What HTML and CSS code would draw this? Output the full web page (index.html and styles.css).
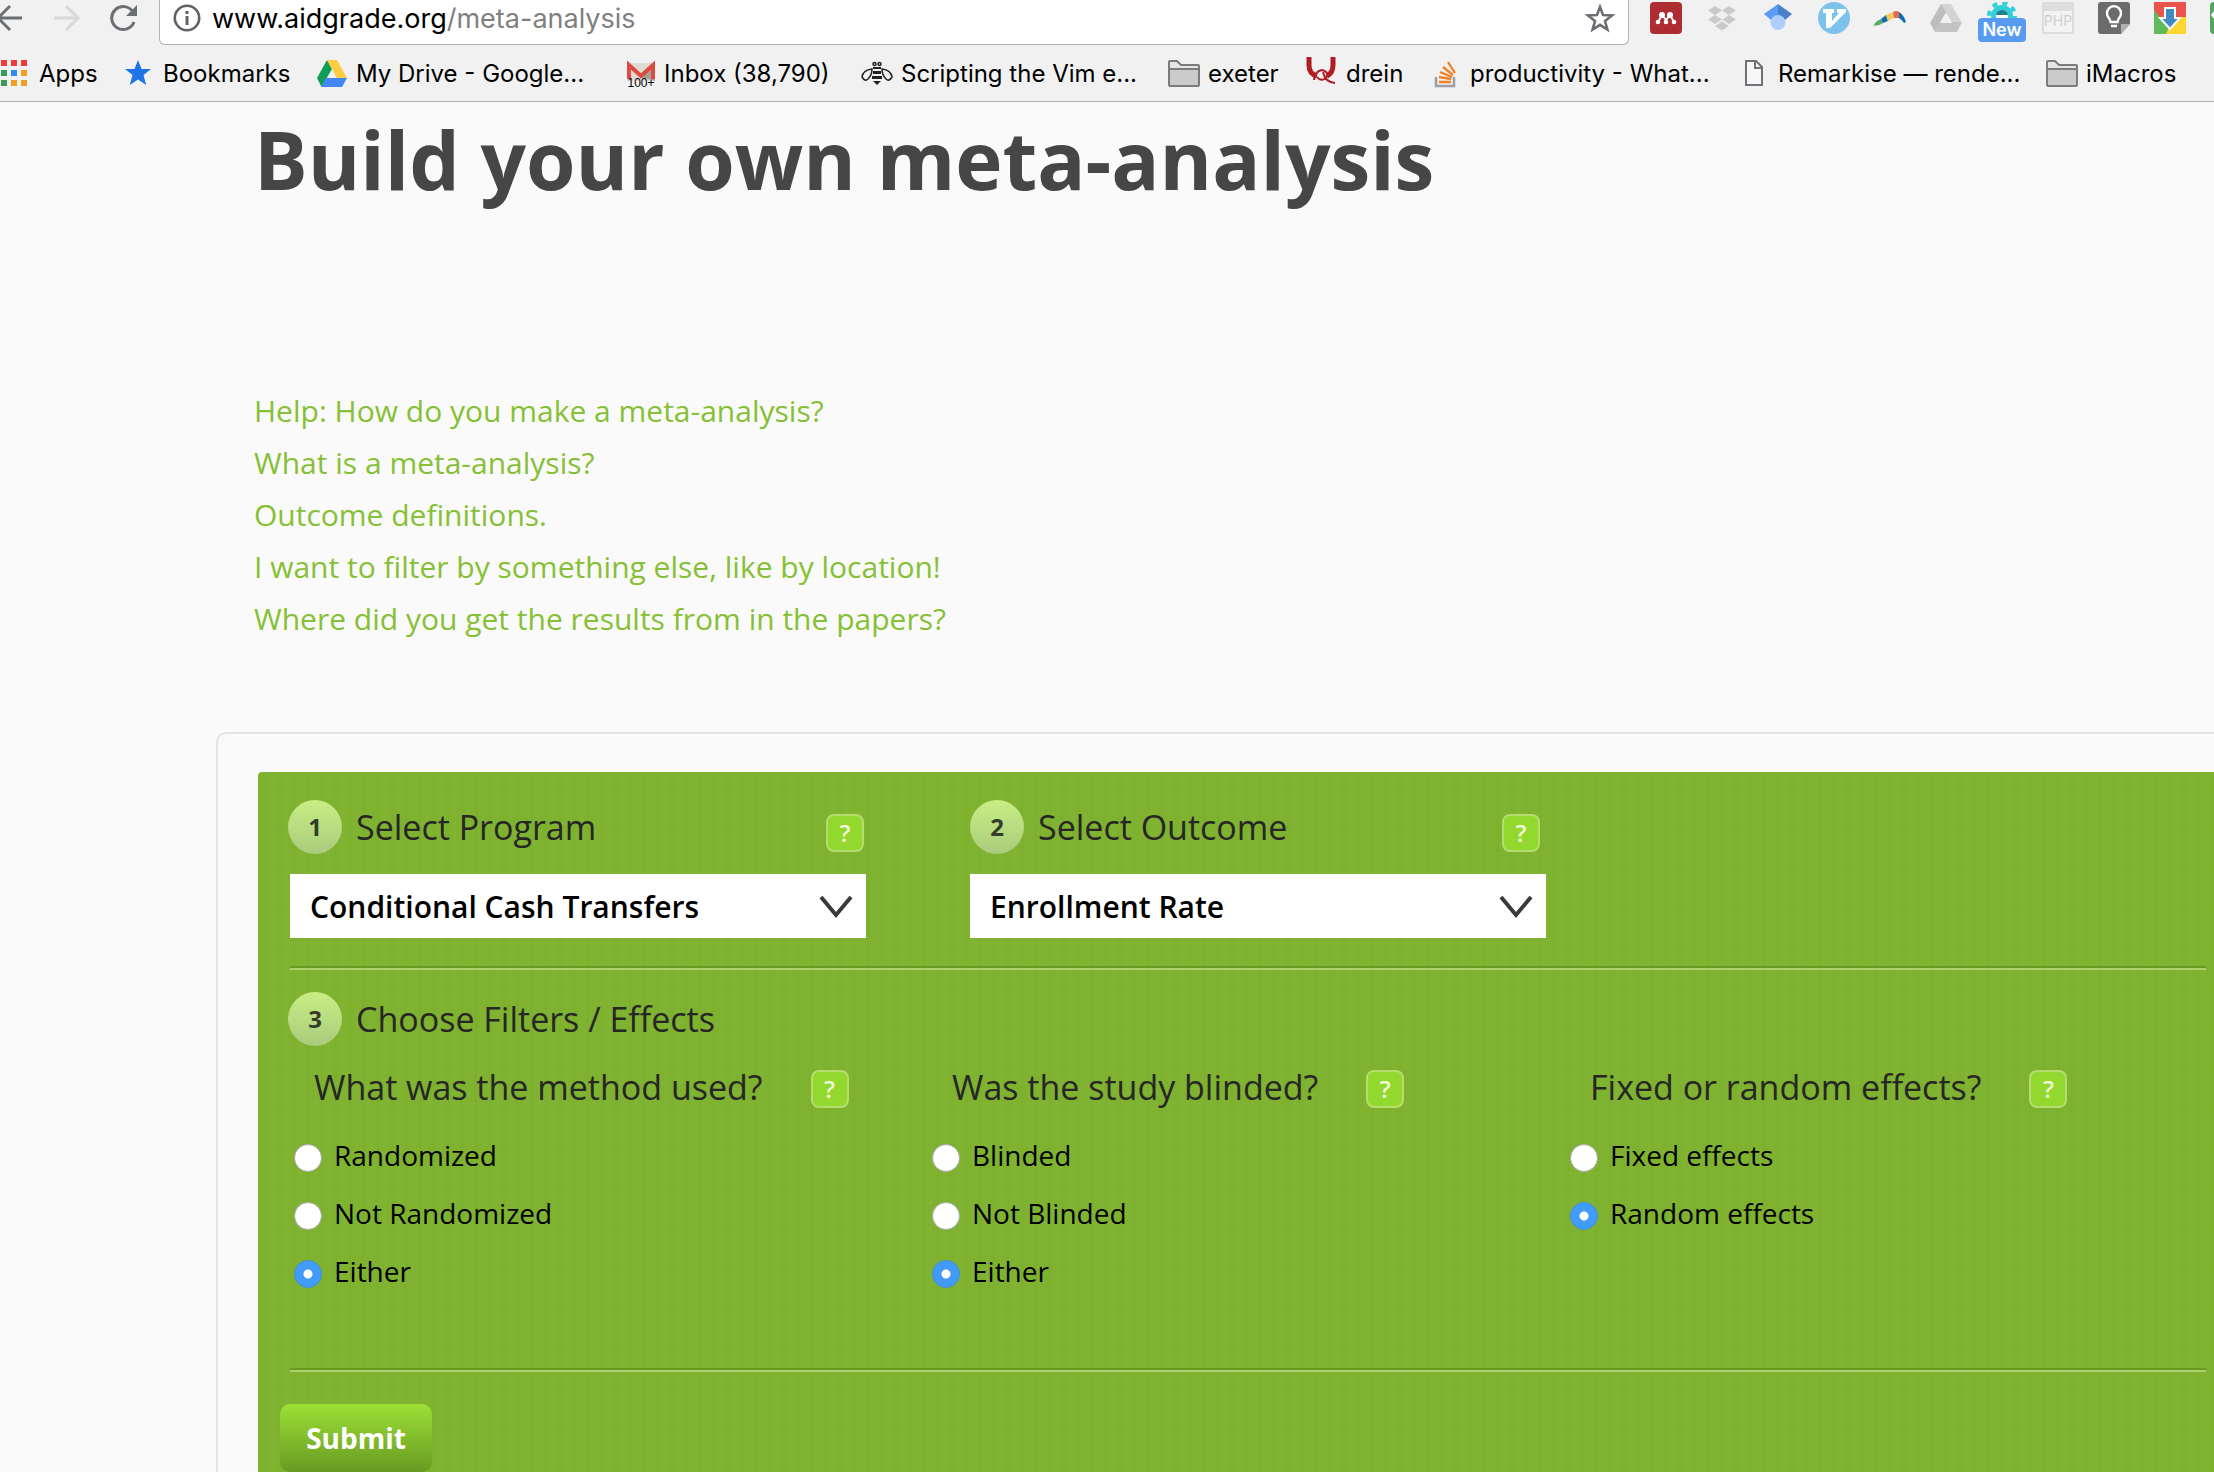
FILE: index.html
```html
<!DOCTYPE html>
<html lang="en">
<head>
<meta charset="utf-8">
<title>Build your own meta-analysis</title>
<link rel="stylesheet" href="styles.css">
</head>
<body>
<header class="browser">
  <div class="toolbar">
    <div class="nav">
      <button class="icon-button" type="button" aria-label="Back"><svg width="28" height="28" viewBox="0 0 28 28" fill="none" stroke="#6b6e72" stroke-width="3"><path d="M25 14H2M13 2 1 14l12 12"/></svg></button>
      <button class="icon-button" type="button" aria-label="Forward"><svg width="28" height="28" viewBox="0 0 28 28" fill="none" stroke="#d6d8da" stroke-width="3"><path d="M1 14h23M13 2l12 12-12 12"/></svg></button>
      <button class="icon-button" type="button" aria-label="Reload"><svg width="28" height="28" viewBox="0 0 28 28"><path d="M24 8A11.500 11.500 0 1 0 25 18" fill="none" stroke="#6b6e72" stroke-width="3"/><path d="M28 1v11H17z" fill="#6b6e72"/></svg></button>
    </div>
    <div class="address">
      <svg width="28" height="28" viewBox="0 0 28 28"><circle cx="14" cy="14" r="12.200" fill="none" stroke="#5f6368" stroke-width="2.600"/><path d="M12.500 7h3v3h-3zM12.500 12h3v9h-3z" fill="#5f6368"/></svg>
      <span class="url">www.aidgrade.org<span class="path">/meta-analysis</span></span>
      <svg width="30" height="30" viewBox="0 0 30 30"><path d="M15 4l3 8 9 .4-7 5.600 2.400 8.600L15 21.800 7.600 26.600 10 18l-7-5.600 9-.4z" fill="none" stroke="#6b6e72" stroke-width="2.600"/></svg>
    </div>
    <div class="extensions">
      <svg width="32" height="32" viewBox="0 0 32 32"><rect width="32" height="32" rx="4" fill="#ad2d30"/><g fill="#fff"><circle cx="12" cy="13" r="3"/><circle cx="20" cy="13" r="3"/><circle cx="8" cy="20" r="2.300"/><circle cx="16" cy="20" r="2.300"/><circle cx="24" cy="20" r="2.300"/></g><path d="M8 20l4-7 4 5 4-5 4 7" fill="none" stroke="#fff" stroke-width="2"/></svg>
      <svg width="32" height="32" viewBox="0 0 32 32" fill="#cacaca"><path d="M9 4l7 4.500L9 13 2 8.500zM23 4l7 4.500-7 4.500-7-4.500zM9 13l7 4.500L9 22l-7-4.500zM23 13l7 4.500-7 4.500-7-4.500zM16 19.500l7 4.500-7 4.500L9 24z"/></svg>
      <svg width="32" height="32" viewBox="0 0 32 32"><path d="M16 2L2 12l7 6h7z" fill="#5b9cf5"/><path d="M16 2l14 10-7 6h-7z" fill="#4a80cc"/><circle cx="16" cy="20.500" r="7.500" fill="#aecdfb"/></svg>
      <svg width="32" height="32" viewBox="0 0 32 32"><circle cx="16" cy="16" r="16" fill="#7cc2ea"/><path d="M5 7h11v4h-2v8l7-8h-2V7h9v3L12 26H8V11H5z" fill="#fff"/></svg>
      <svg width="32" height="32" viewBox="0 0 32 32"><path d="M0 24q0-4 7-7l2 4q-4 3-9 3z" fill="#55ad68"/><path d="M7 17l5-4 2 6-5 2z" fill="#116fae"/><path d="M12 13l7-3 1 6-6 3z" fill="#fbc957"/><path d="M19 10q4-2 6 0v6l-5 0z" fill="#e96a55"/><path d="M25 10q5 3 7 10l-2 1q-2-3-5-5z" fill="#116fae"/></svg>
      <svg width="32" height="32" viewBox="0 0 32 32"><path d="M11 2h10L11 19 5 30 0 21z" fill="#bdbdbd"/><path d="M11 2h10l11 19H22z" fill="#d4d4d4"/><path d="M10 20h22l-5 10H5z" fill="#c3c3c3"/><path d="M16 11l6 10H10z" fill="#f1f1f1"/></svg>
      <div class="ext-new"><svg width="32" height="32" viewBox="0 0 32 32"><circle cx="16" cy="14" r="8.500" fill="none" stroke="#2fd0d8" stroke-width="5"/><circle cx="16" cy="14" r="13" fill="none" stroke="#2fd0d8" stroke-width="4" stroke-dasharray="5 5.200"/><circle cx="16" cy="14" r="6" fill="#fff"/><path d="M10 13a6 5 0 0 1 12 0" fill="#217f92"/></svg><span class="badge">New</span></div>
      <svg width="32" height="32" viewBox="0 0 32 32"><rect x="1" y="1" width="30" height="30" fill="#f3f3f3" stroke="#dcdcdc" stroke-width="2"/><path d="M2 2h28v7H2z" fill="#dedede"/><text x="16" y="24" text-anchor="middle" class="php">PHP</text></svg>
      <svg width="32" height="32" viewBox="0 0 32 32"><path d="M3 0h26q3 0 3 3v19l-9 10H3q-3 0-3-3V3q0-3 3-3z" fill="#6b6b6b"/><path d="M23 32v-10h9z" fill="#b0b0b0"/><path d="M12.500 20q0-2-2-4.500a7 7 0 1 1 11 0q-2 2.500-2 4.500zM13 24h6" fill="none" stroke="#fff" stroke-width="2.400"/></svg>
      <svg width="32" height="32" viewBox="0 0 32 32"><path d="M0 0h32v16H0z" fill="#e9544d"/><path d="M0 8l16 20-3 4H0z" fill="#5fba5c"/><path d="M32 15v17H12l8-17z" fill="#fdd630"/><path d="M11 6h10v10h5L16 27 6 16h5z" fill="#428bc0" stroke="#fff" stroke-width="2"/></svg>
      <svg width="4" height="32" viewBox="0 0 4 32"><path d="M4 0v32q-4 0-4-4V4q0-4 4-4z" fill="#4fa85b"/><path d="M4 9v8l-3-4z" fill="#fff"/></svg>
    </div>
  </div>
  <nav class="bookmarks">
    <a href="#apps"><svg width="32" height="32" viewBox="0 0 32 32"><path d="M2 3h6v6H2zM12 3h6v6h-6zM22 3h6v6h-6z" fill="#f03a3a"/><path d="M2 13h6v6H2zM2 23h6v6H2z" fill="#3a9b5c"/><path d="M12 13h6v6h-6z" fill="#2c8cf0"/><path d="M22 13h6v6h-6zM12 23h6v6h-6zM22 23h6v6h-6z" fill="#f0a020"/></svg>Apps</a>
    <a href="#bookmarks"><svg width="32" height="32" viewBox="0 0 32 32"><path d="M15 3l3.500 9H28l-7.500 6 2.700 10L15 22.500 6.800 28l2.700-10L2 12h9.500z" fill="#1f74e8"/></svg>Bookmarks</a>
    <a href="#drive"><svg width="32" height="32" viewBox="0 0 32 32"><path d="M11 3L1 21l4.500 9L16 12z" fill="#109d58"/><path d="M11 3h10l10 18H21z" fill="#ffcd40"/><path d="M10 21h21l-5 9H5.500z" fill="#4386f5"/></svg>My Drive - Google...</a>
    <a href="#inbox"><svg width="32" height="32" viewBox="0 0 32 32"><path d="M3 6h28v18H3z" fill="#dedbd2"/><path d="M17 20L31 8v16z" fill="#a3a19c"/><path d="M5 22V8l12 11L29 8v14" fill="none" stroke="#de4b40" stroke-width="4"/><text x="17" y="30" text-anchor="middle" class="count">100+</text></svg>Inbox (38,790)</a>
    <a href="#vim"><svg width="32" height="32" viewBox="0 0 32 32"><g fill="none" stroke="#222" stroke-width="1.500"><path d="M11 12Q2 13 1 20q3 5 6 2 4-4 4-10zM21 12q9 1 10 8-3 5-6 2-4-4-4-10z"/><circle cx="13.500" cy="7" r="1.500"/><circle cx="18.500" cy="7" r="1.500"/></g><path d="M12 10h8v2h-8zM12 14h8v3h-8zM11 19h10v3H11zM12 24h8l-4 4z" fill="#222"/></svg>Scripting the Vim e...</a>
    <a href="#exeter"><svg width="32" height="32" viewBox="0 0 32 32"><path d="M1 29V5q0-1 1-1h8l3 4h17q1 0 1 1v20q0 1-1 1H2q-1 0-1-1z" fill="#e6e6e6"/><path d="M2 12h28v17H2z" fill="#cbcbcb"/><path d="M1 28V5q0-1 1-1h7l4 4h17q1 0 1 1v19q0 1-1 1H2q-1 0-1-1zM1 12h30" fill="none" stroke="#7c7c7c" stroke-width="2"/></svg>exeter</a>
    <a href="#drein"><svg width="32" height="32" viewBox="0 0 32 32" fill="none" stroke="#b01e24"><path d="M3 0v8q0 9 8 11M27 0v8q0 8-6 11" stroke-width="5"/><path d="M8 23q1-9 8-10 8 2 4 8-5 4-9-1M17 15q2 10 12 11" stroke-width="2"/></svg>drein</a>
    <a href="#productivity"><svg width="32" height="32" viewBox="0 0 32 32" fill="none"><path d="M6 20v9h18v-9" stroke="#9b9ea3" stroke-width="2.500"/><path d="M9 25h12M9 20l12 2M10 15l12 5M13 10l10 8M18 5l7 11" stroke="#f48024" stroke-width="2.300"/></svg>productivity - What...</a>
    <a href="#remarkise"><svg width="32" height="32" viewBox="0 0 32 32"><path d="M8 4h10l6 6v18H8zM17 4v7h7" fill="#f6f6f6" stroke="#6f7276" stroke-width="2"/></svg>Remarkise — rende...</a>
    <a href="#imacros"><svg width="32" height="32" viewBox="0 0 32 32"><path d="M1 29V5q0-1 1-1h8l3 4h17q1 0 1 1v20q0 1-1 1H2q-1 0-1-1z" fill="#e6e6e6"/><path d="M2 12h28v17H2z" fill="#cbcbcb"/><path d="M1 28V5q0-1 1-1h7l4 4h17q1 0 1 1v19q0 1-1 1H2q-1 0-1-1zM1 12h30" fill="none" stroke="#7c7c7c" stroke-width="2"/></svg>iMacros</a>
  </nav>
</header>
<main class="page">
  <h1>Build your own meta-analysis</h1>
  <ul class="help-links">
    <li><a href="#make">Help: How do you make a meta-analysis?</a></li>
    <li><a href="#what">What is a meta-analysis?</a></li>
    <li><a href="#outcomes">Outcome definitions.</a></li>
    <li><a href="#filter">I want to filter by something else, like by location!</a></li>
    <li><a href="#results">Where did you get the results from in the papers?</a></li>
  </ul>
  <div class="card">
    <form class="panel">
      <div class="selectors">
        <div class="selector">
          <div class="step"><span class="number">1</span><label for="program">Select Program</label><button class="help" type="button" aria-label="Help on programs">?</button></div>
          <div class="dropdown"><select id="program"><option>Conditional Cash Transfers</option></select><svg class="chevron" width="36" height="24" viewBox="0 0 36 24"><path d="M3 2l15 18L33 2" fill="none" stroke="#3a3a3a" stroke-width="4"/></svg></div>
        </div>
        <div class="selector">
          <div class="step inset"><span class="number">2</span><label for="outcome">Select Outcome</label><button class="help" type="button" aria-label="Help on outcomes">?</button></div>
          <div class="dropdown"><select id="outcome"><option>Enrollment Rate</option></select><svg class="chevron" width="36" height="24" viewBox="0 0 36 24"><path d="M3 2l15 18L33 2" fill="none" stroke="#3a3a3a" stroke-width="4"/></svg></div>
        </div>
      </div>
      <hr>
      <div class="step"><span class="number">3</span><h2>Choose Filters / Effects</h2></div>
      <div class="filters">
        <div class="filter" role="radiogroup" aria-labelledby="q-method">
          <div class="question"><span id="q-method">What was the method used?</span><button class="help" type="button" aria-label="Help on method">?</button></div>
          <label><input type="radio" name="method">Randomized</label>
          <label><input type="radio" name="method">Not Randomized</label>
          <label><input type="radio" name="method" checked>Either</label>
        </div>
        <div class="filter" role="radiogroup" aria-labelledby="q-blinded">
          <div class="question"><span id="q-blinded">Was the study blinded?</span><button class="help" type="button" aria-label="Help on blinding">?</button></div>
          <label><input type="radio" name="blinded">Blinded</label>
          <label><input type="radio" name="blinded">Not Blinded</label>
          <label><input type="radio" name="blinded" checked>Either</label>
        </div>
        <div class="filter" role="radiogroup" aria-labelledby="q-effects">
          <div class="question"><span id="q-effects">Fixed or random effects?</span><button class="help" type="button" aria-label="Help on effects">?</button></div>
          <label><input type="radio" name="effects">Fixed effects</label>
          <label><input type="radio" name="effects" checked>Random effects</label>
        </div>
      </div>
      <hr>
      <button class="submit" type="submit">Submit</button>
    </form>
  </div>
</main>
</body>
</html>
```
FILE: styles.css
```css
* { box-sizing: border-box; }
body {
  margin: 0;
  background: #fafafa;
  font-family: "Open Sans", sans-serif;
  overflow: hidden;
}
svg { display: block; flex: none; }
button { font-family: inherit; border: 0; padding: 0; cursor: pointer; }

/* Browser bar */
.browser {
  background: #f1f1f1;
  border-bottom: 1px solid #b3b3b3;
  font-family: Inter, sans-serif;
  font-size: 24px;
}
.toolbar { display: flex; align-items: flex-start; height: 45px; }
.nav { display: flex; gap: 28px; width: 159px; margin-top: 4px; margin-left: -3px; }
.icon-button { background: none; }
.address {
  flex: 1;
  display: flex;
  align-items: center;
  height: 45px;
  padding: 0 13px 8px 13px;
  margin-left: 3px;
  background: #fff;
  border: 1px solid #b3b3b3;
  border-top: 0;
  border-radius: 0 0 6px 6px;
}
.url { flex: 1; margin-left: 11px; font-size: 27px; }
.path { color: #808080; }
.extensions { display: flex; gap: 24px; margin: 2px 0 0 21px; }
.ext-new { position: relative; }
.badge {
  position: absolute;
  left: -8px;
  top: 16px;
  width: 48px;
  background: #579bf0;
  border-radius: 4px;
  color: #fff;
  font-size: 18px;
  font-weight: 600;
  line-height: 24px;
  text-align: center;
}
.php { font: 14px Inter, sans-serif; fill: #cfcfcf; }
.count { font: 12px "Liberation Sans", sans-serif; fill: #000; }
.bookmarks {
  display: grid;
  grid-template-columns: 124px 193px 308px 237px 307px 138px 124px 308px 308px 1fr;
  margin-left: -1px;
  height: 56px;
}
.bookmarks a {
  display: flex;
  align-items: center;
  gap: 8px;
  color: #000;
  text-decoration: none;
  white-space: nowrap;
}

/* Page */
.page { padding: 1px 0 0 216px; }
h1 {
  margin: 0 0 170px 38px;
  color: #464646;
  font-size: 80px;
  line-height: 112px;
}
.help-links {
  margin: 0 0 87px 38px;
  padding: 0;
  list-style: none;
  font-size: 30px;
  line-height: 52px;
}
.help-links a { color: #86c034; text-decoration: none; }
.card {
  padding: 38px 0 0 40px;
  border: 2px solid #e3e3e3;
  border-width: 2px 0 0 2px;
  border-radius: 10px 0 0 0;
}
.panel {
  padding: 28px 8px 28px 32px;
  border-radius: 4px 0 0 0;
  background:
    repeating-linear-gradient(90deg, rgba(255, 255, 255, .02) 0 2px, transparent 2px 7px, rgba(0, 0, 0, .015) 7px 9px, transparent 9px 14px),
    repeating-linear-gradient(rgba(255, 255, 255, .015) 0 2px, transparent 2px 10px),
    #7eb22f;
  color: #262626;
}
.selectors { display: flex; gap: 104px; }
.selector { width: 576px; }
.step {
  display: flex;
  align-items: flex-start;
  margin: 0 2px 0 -2px;
  font-size: 34px;
  line-height: 54px;
}
.step.inset { margin: 0 6px 0 0; }
.step h2 { margin: 0; font-size: inherit; font-weight: 400; }
.number {
  width: 54px;
  height: 54px;
  margin-right: 14px;
  border-radius: 50%;
  background: linear-gradient(#c8ee85, #a9cb7c);
  color: #363c2b;
  font-size: 24px;
  font-weight: 700;
  text-align: center;
}
.help {
  width: 38px;
  height: 38px;
  border: 2px solid #b6dc6e;
  border-radius: 8px;
  background: #93d82f;
  color: #f4ffd8;
  font-size: 24px;
  font-weight: 600;
  line-height: 32px;
}
.step .help { margin: 14px 0 0 auto; }
.dropdown { position: relative; margin-top: 20px; }
select {
  display: block;
  appearance: none;
  width: 100%;
  height: 64px;
  padding: 0 60px 0 20px;
  border: 0;
  border-radius: 0;
  background: #fff;
  color: #000;
  font: 600 30px "Open Sans", sans-serif;
}
.chevron { position: absolute; right: 12px; top: 21px; pointer-events: none; }
hr {
  height: 4px;
  margin: 28px 0 22px;
  border: 0;
  background: linear-gradient(#679a22 50%, #aed170 50%);
}
.filters { display: grid; grid-template-columns: 638px 638px 1fr; min-height: 270px; margin-top: 24px; }
.filter { display: flex; flex-direction: column; }
.question {
  display: flex;
  align-items: flex-start;
  gap: 48px;
  height: 38px;
  margin: 0 0 18px 24px;
  font-size: 34px;
  line-height: 34px;
}
.filter label {
  display: flex;
  align-items: center;
  gap: 12px;
  height: 58px;
  margin-left: 4px;
  color: #000;
  font-size: 28px;
  line-height: 36px;
}
input[type="radio"] {
  appearance: none;
  width: 28px;
  height: 28px;
  margin: 6px 0 0;
  border: 1px solid #a9a9b4;
  border-radius: 50%;
  background: #fff;
}
input[type="radio"]:checked {
  border-color: #3c8fe6;
  background: radial-gradient(circle, #fff 4px, #429bf8 5px);
}
.submit {
  display: block;
  width: 152px;
  height: 68px;
  margin: 32px 0 0 -10px;
  border-radius: 10px;
  background: linear-gradient(#9ddf36, #679a22);
  color: #fff;
  font-size: 28px;
  font-weight: 700;
}
```
